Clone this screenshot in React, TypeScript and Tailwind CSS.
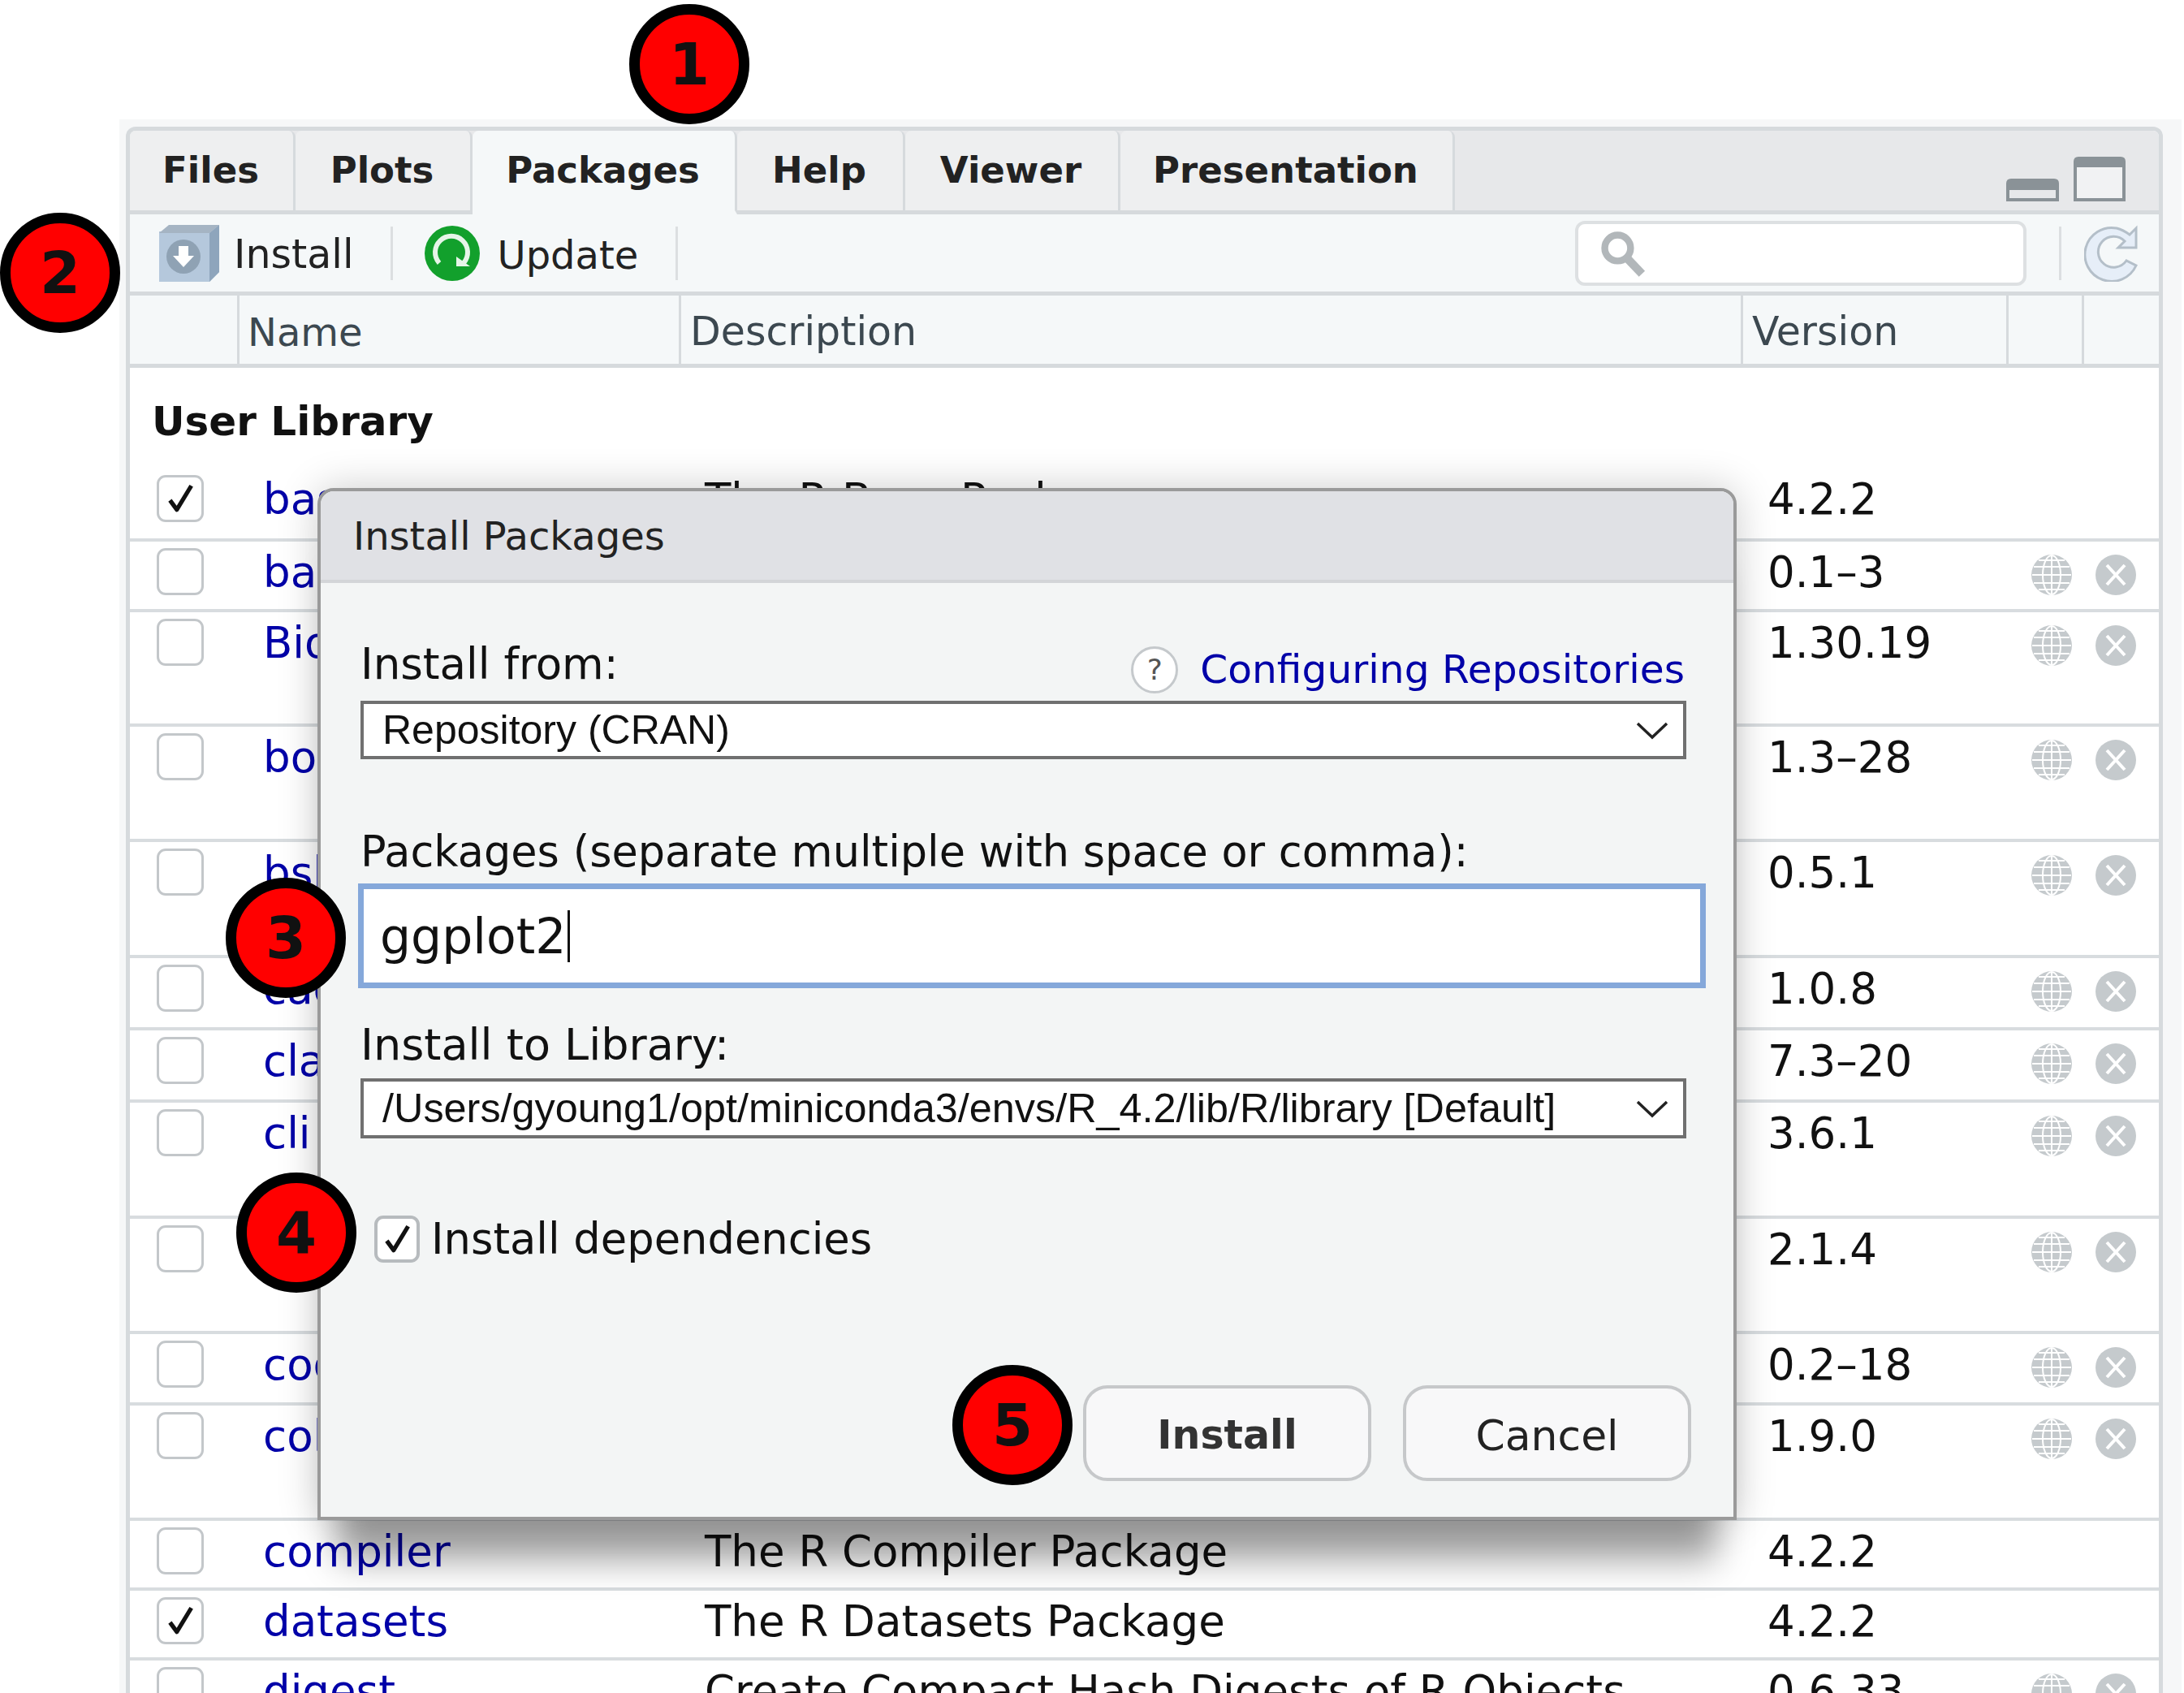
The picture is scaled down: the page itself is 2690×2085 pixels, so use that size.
import React from 'react';

type Pkg = {
  name: string;
  desc?: string;
  version: string;
  h: string;
  checked?: boolean;
  actions?: boolean;
};

const packages: Pkg[] = [
  { name: 'base', desc: 'The R Base Package', version: '4.2.2', h: 'h-[90px]', checked: true },
  { name: 'base64enc', version: '0.1–3', h: 'h-[87px]', actions: true },
  { name: 'BiocManager', version: '1.30.19', h: 'h-[141px]', actions: true },
  { name: 'boot', version: '1.3–28', h: 'h-[142px]', actions: true },
  { name: 'bslib', version: '0.5.1', h: 'h-[143px]', actions: true },
  { name: 'cachem', version: '1.0.8', h: 'h-[89px]', actions: true },
  { name: 'class', version: '7.3–20', h: 'h-[89px]', actions: true },
  { name: 'cli', version: '3.6.1', h: 'h-[143px]', actions: true },
  { name: 'clipr', version: '2.1.4', h: 'h-[142px]', actions: true },
  { name: 'codetools', version: '0.2–18', h: 'h-[88px]', actions: true },
  { name: 'colorspace', version: '1.9.0', h: 'h-[142px]', actions: true },
  { name: 'compiler', desc: 'The R Compiler Package', version: '4.2.2', h: 'h-[86px]' },
  { name: 'datasets', desc: 'The R Datasets Package', version: '4.2.2', h: 'h-[86px]', checked: true },
  { name: 'digest', desc: 'Create Compact Hash Digests of R Objects', version: '0.6.33', h: 'h-[86px]', actions: true },
];

const tabs = [
  { label: 'Files', w: 'w-[204px]' },
  { label: 'Plots', w: 'w-[218px]' },
  { label: 'Packages', w: 'w-[326px]', active: true },
  { label: 'Help', w: 'w-[207px]' },
  { label: 'Viewer', w: 'w-[265px]' },
  { label: 'Presentation', w: 'w-[412px]' },
];

function Check({ className }: { className: string }) {
  return (
    <svg viewBox="0 0 40 40" className={className} fill="none">
      <path d="M8 22 L16 33 L33 5" stroke="#111" strokeWidth="5" strokeLinejoin="round" />
    </svg>
  );
}

function Globe() {
  return (
    <svg viewBox="0 0 50 50" className="h-[50px] w-[50px]">
      <circle cx="25" cy="25" r="25" fill="#c5cacd" />
      <g fill="none" stroke="#fff" strokeWidth="2">
        <ellipse cx="25" cy="25" rx="11" ry="24" />
        <path d="M25 1V49M3 15H47M1 25H49M3 35H47M9 7H41M9 43H41" />
      </g>
    </svg>
  );
}

function RemoveIcon() {
  return (
    <svg viewBox="0 0 50 50" className="h-[50px] w-[50px]">
      <circle cx="25" cy="25" r="25" fill="#c5cacd" />
      <path d="M14 13L36 37M36 13L14 37" stroke="#fff" strokeWidth="4" />
    </svg>
  );
}

function Chevron() {
  return (
    <svg viewBox="0 0 40 24" className="h-[24px] w-[40px]" fill="none">
      <path d="M2 4L20 21L38 4" stroke="#222" strokeWidth="3.5" />
    </svg>
  );
}

function Badge({ n, className }: { n: number; className: string }) {
  return (
    <div
      className={`absolute flex h-[148px] w-[148px] items-center justify-center rounded-full border-[13px] border-black bg-[#ff0000] text-[72px] font-bold text-[#111] ${className}`}
    >
      {n}
    </div>
  );
}

function Row({ pkg }: { pkg: Pkg }) {
  return (
    <div className={`flex shrink-0 border-b-[4px] border-[#d8dcdf] text-[53px] ${pkg.h}`}>
      <div className="w-[164px] shrink-0 pl-[33px] pt-[8px]">
        <div className="flex h-[58px] w-[58px] items-center justify-center rounded-[11px] border-[3px] border-[#c3c7ca] bg-white">
          {pkg.checked && <Check className="h-[42px] w-[42px]" />}
        </div>
      </div>
      <div className="w-[544px] shrink-0 text-[#0000a8] leading-[76px]">{pkg.name}</div>
      <div className="w-[1309px] shrink-0 leading-[76px] text-[#111]">{pkg.desc}</div>
      <div className="w-[325px] shrink-0 leading-[76px] text-[#111]">{pkg.version}</div>
      {pkg.actions && (
        <div className="flex gap-[29px] pt-[16px]">
          <Globe />
          <RemoveIcon />
        </div>
      )}
    </div>
  );
}

export default function App() {
  return (
    <div className="relative h-[2085px] w-[2690px] overflow-hidden bg-white font-['DejaVu_Sans',sans-serif] text-[49px]">
      <div className="h-[147px]" />
      <div className="ml-[147px] h-[1938px] w-[2540px] bg-[#f6f7f8] pl-[8px] pt-[9px]">
        <div className="h-full w-[2509px] overflow-hidden rounded-t-[12px] border-x-[5px] border-t-[5px] border-[#d6dadd] bg-white">
          {/* tab strip */}
          <div className="relative flex h-[103px] bg-[#e7e8ea]">
            {tabs.map((tab) => (
              <div
                key={tab.label}
                className={`flex h-full items-center justify-center rounded-t-[8px] border-b-[5px] border-r-[3px] border-[#d6dadd] pr-[2px] text-[45px] font-bold text-[#222] ${tab.w} ${
                  tab.active ? 'border-b-[#f5f8f9] bg-[#f5f8f9]' : 'bg-[#eeeff0]'
                }`}
              >
                {tab.label}
              </div>
            ))}
            <div className="flex-1 border-b-[5px] border-[#d6dadd]" />
            <div className="absolute right-[41px] top-[32px] flex items-end gap-[18px]">
              <svg viewBox="0 0 65 28" className="h-[28px] w-[65px]">
                <path d="M0 28V6Q0 0 6 0H59Q65 0 65 6V28Z" fill="#8a9297" />
                <rect x="4" y="14" width="57" height="10" fill="#e7e8ea" />
              </svg>
              <svg viewBox="0 0 64 55" className="h-[55px] w-[64px]">
                <path d="M0 55V6Q0 0 6 0H58Q64 0 64 6V55Z" fill="#8a9297" />
                <rect x="4" y="13" width="56" height="38" fill="#f1f2f3" />
              </svg>
            </div>
          </div>

          {/* toolbar */}
          <div className="flex h-[100px] items-center border-b-[5px] border-[#d6dadd] bg-[#f5f8f9]">
            <svg viewBox="0 0 74 70" className="ml-[36px] h-[70px] w-[74px]">
              <path d="M10 8L22 0H74L74 58L62 70H0V8Z" fill="#b5c8dc" />
              <path d="M62 10L74 0V58L62 70Z" fill="#8ea5bc" />
              <path d="M0 10L12 0H74L62 10Z" fill="#a5b4c3" />
              <circle cx="30" cy="39" r="21" fill="#8fa2b4" />
              <path d="M24 26H36V38H43L30 52L17 38H24Z" fill="#fff" />
            </svg>
            <span className="ml-[18px] pt-[5px] text-[#222]">Install</span>
            <div className="ml-[45px] h-[66px] w-[3px] bg-[#dcdfe1]" />
            <svg viewBox="0 0 68 68" className="ml-[39px] h-[68px] w-[68px]">
              <circle cx="34" cy="34" r="34" fill="#12a02c" />
              <path d="M18 46A20 20 0 1 1 48 46" fill="none" stroke="#e6f5e8" strokeWidth="6" />
              <path d="M39 38L56 50H39Z" fill="#e6f5e8" />
            </svg>
            <span className="ml-[22px] pt-[5px] text-[48px] text-[#222]">Update</span>
            <div className="ml-[46px] h-[66px] w-[3px] bg-[#dcdfe1]" />
            <div className="flex-1" />
            <div className="flex h-[80px] w-[556px] items-center rounded-[12px] border-[4px] border-[#dde0e2] bg-white pl-[26px]">
              <svg viewBox="0 0 62 62" className="h-[58px] w-[58px]" fill="none">
                <circle cx="24" cy="24" r="17" stroke="#b2b7ba" strokeWidth="9" />
                <path d="M36 37L56 58" stroke="#b2b7ba" strokeWidth="11" />
              </svg>
            </div>
            <div className="ml-[40px] h-[66px] w-[3px] bg-[#dcdfe1]" />
            <svg viewBox="0 0 68 70" className="ml-[28px] mr-[24px] h-[70px] w-[68px]" fill="none">
              <path
                d="M64 4V28H42L50 20A19 19 0 1 0 52 44L64 50A33 33 0 1 1 40 4Q48 6 56 12Z"
                fill="#e6eef8"
                stroke="#b4bfc9"
                strokeWidth="3"
              />
            </svg>
          </div>

          {/* column headers */}
          <div className="flex h-[89px] border-b-[5px] border-[#d6dadd] bg-[#f5f8f9] text-[#3c4850]">
            <div className="w-[135px] border-r-[3px] border-[#d6dadd]" />
            <div className="flex w-[544px] items-center border-r-[3px] border-[#d6dadd] pl-[10px] pt-[5px] text-[48px]">Name</div>
            <div className="flex w-[1308px] items-center border-r-[3px] border-[#d6dadd] pl-[11px] pt-[5px]">Description</div>
            <div className="flex w-[327px] items-center border-r-[3px] border-[#d6dadd] pl-[11px] pt-[5px]">Version</div>
            <div className="w-[93px] border-r-[3px] border-[#d6dadd]" />
          </div>

          <div className="flex h-[124px] items-center pl-[27px] pt-[8px] text-[50px] font-bold text-[#111]">User Library</div>

          {packages.map((pkg) => (
            <Row key={pkg.name} pkg={pkg} />
          ))}
        </div>
      </div>

      {/* install dialog */}
      <div className="absolute left-[391px] top-[601px] flex h-[1271px] w-[1748px] flex-col rounded-t-[20px] border-[4px] border-[#9a9a9a] bg-[#f3f5f5] shadow-[0_75px_40px_-25px_rgba(0,0,0,0.36),0_0_50px_rgba(0,0,0,0.2)]">
        <div className="flex h-[113px] shrink-0 items-center rounded-t-[16px] border-b-[4px] border-[#d3d5d8] bg-[#e0e1e5] pl-[40px] text-[48px] text-[#222]">
          Install Packages
        </div>
        <div className="flex flex-col pl-[49px] pr-[58px]">
          <div className="mt-[70px] flex h-[60px] items-center justify-between text-[53px]">
            <span className="text-[#111]">Install from:</span>
            <div className="mt-[13px] flex items-center gap-[27px] pr-[2px] text-[48.7px]">
              <div className="flex h-[58px] w-[58px] items-center justify-center rounded-full border-[3px] border-[#c5c9cc] bg-white text-[36px] text-[#555]">
                ?
              </div>
              <span className="text-[#0000a8]">Configuring Repositories</span>
            </div>
          </div>
          <div className="mt-[15px] flex h-[72px] items-center justify-between border-[4px] border-[#707070] bg-white pl-[23px] pr-[18px] font-['Liberation_Sans',sans-serif] text-[50px] text-[#111]">
            <span>Repository (CRAN)</span>
            <Chevron />
          </div>
          <div className="mt-[84px] flex h-[60px] items-center text-[52.5px] text-[#111]">Packages (separate multiple with space or comma):</div>
          <div className="-ml-[3px] -mr-[24px] mt-[9px] flex h-[129px] items-center border-[7px] border-[#85a8da] bg-white pl-[20px] text-[60px] text-[#111]">
            ggplot2
            <div className="ml-[2px] h-[64px] w-[3px] bg-[#111]" />
          </div>
          <div className="mt-[39px] flex h-[60px] items-center text-[54px] text-[#111]">Install to Library:</div>
          <div className="mt-[12px] flex h-[74px] items-center justify-between border-[4px] border-[#707070] bg-white pl-[23px] pr-[18px] font-['Liberation_Sans',sans-serif] text-[50.4px] text-[#111]">
            <span>/Users/gyoung1/opt/miniconda3/envs/R_4.2/lib/R/library [Default]</span>
            <Chevron />
          </div>
          <div className="mt-[94px] flex h-[60px] items-center pl-[17px] text-[52.7px] text-[#111]">
            <div className="flex h-[58px] w-[56px] items-center justify-center rounded-[11px] border-[4px] border-[#b7bbbe] bg-white">
              <Check className="h-[42px] w-[42px]" />
            </div>
            <span className="ml-[14px]">Install dependencies</span>
          </div>
          <div className="mt-[150px] flex justify-end gap-[39px]">
            <button className="h-[118px] w-[355px] rounded-[30px] border-[4px] border-[#c6c8ca] bg-[#f8f8f9] pt-[6px] font-bold text-[#333]">Install</button>
            <button className="-mr-[6px] h-[118px] w-[355px] rounded-[30px] border-[4px] border-[#c6c8ca] bg-[#f8f8f9] pt-[6px] text-[52px] text-[#222]">Cancel</button>
          </div>
        </div>
      </div>

      <Badge n={1} className="left-[775px] top-[5px]" />
      <Badge n={2} className="left-0 top-[262px]" />
      <Badge n={3} className="left-[278px] top-[1081px]" />
      <Badge n={4} className="left-[291px] top-[1444px]" />
      <Badge n={5} className="left-[1173px] top-[1681px]" />
    </div>
  );
}
